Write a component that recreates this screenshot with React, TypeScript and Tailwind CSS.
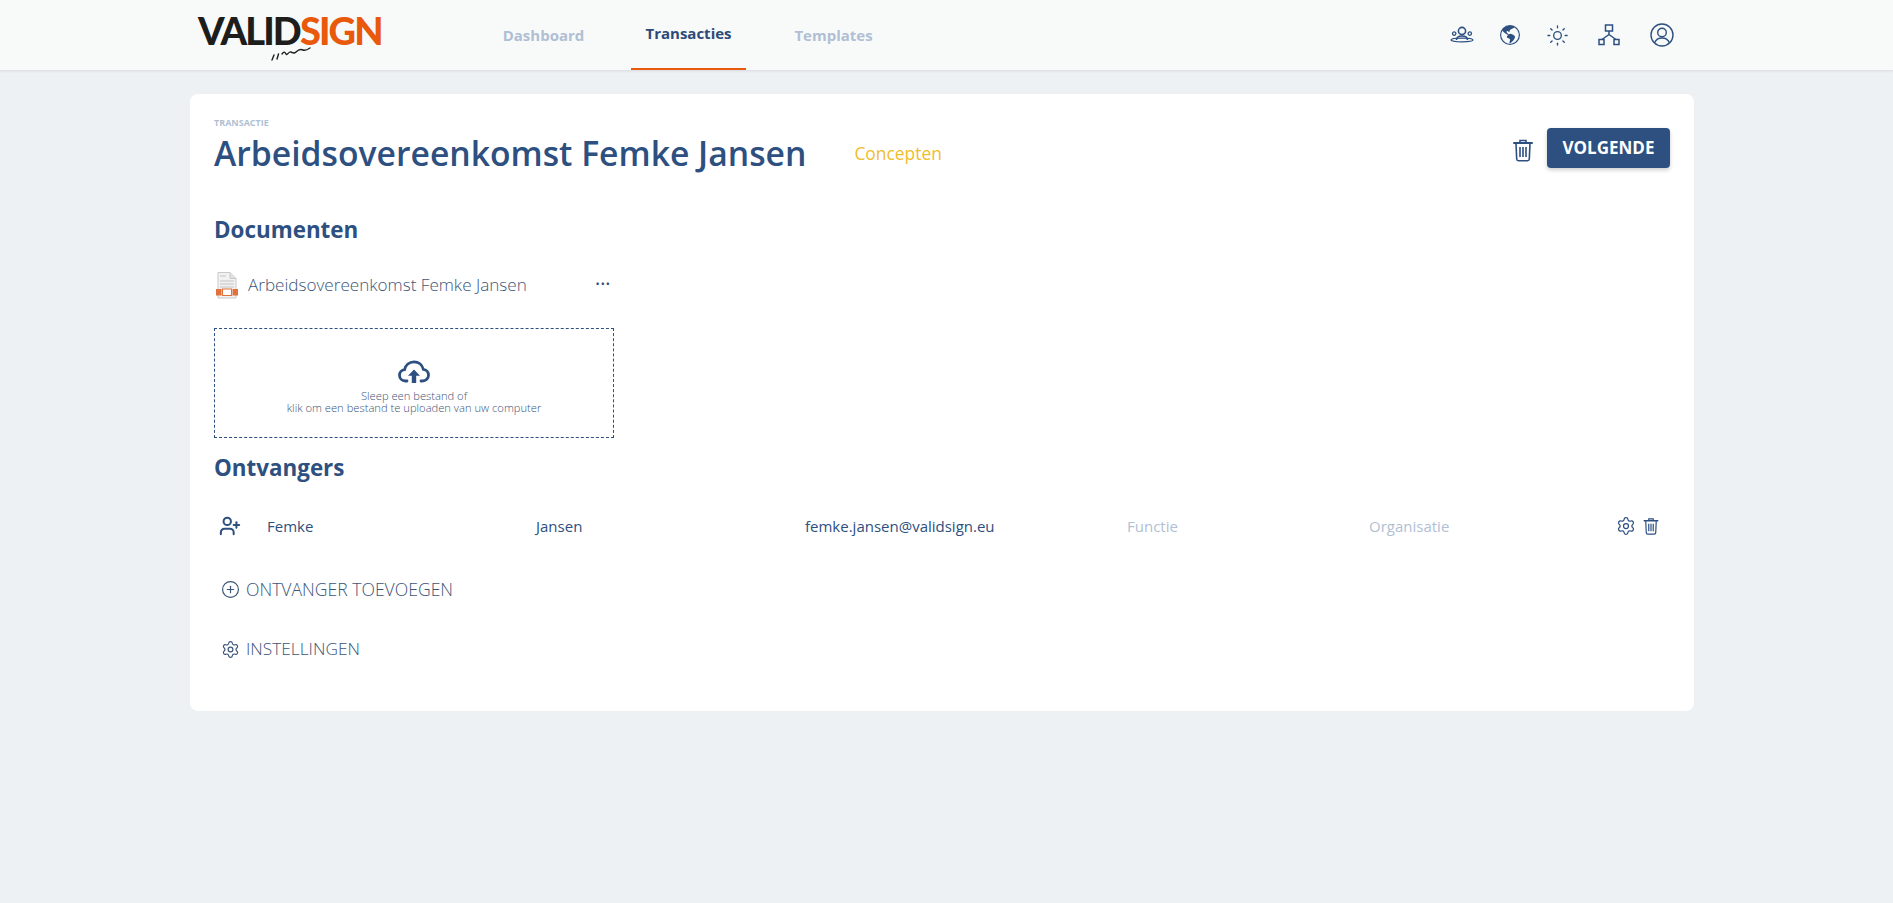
import { CirclePlus, Settings, Sun, UserPlus } from 'lucide-react';
import { BsGlobeAmericas } from 'react-icons/bs';

const font = { fontFamily: '"Open Sans", "Noto Sans", sans-serif' };

function TrashIcon({ className }: { className?: string }) {
  return (
    <svg viewBox="0 0 20 24" fill="none" stroke="currentColor" strokeWidth="1.6" className={className}>
      <path d="M1 5h18" strokeLinecap="round" strokeWidth="2" />
      <path d="M7 4.5V2.5h6v2" />
      <path d="M3 5.5l.7 15.5a1.8 1.8 0 0 0 1.8 1.7h9a1.8 1.8 0 0 0 1.8-1.7L17 5.5" />
      <path d="M7 9v10M10 9v10M13 9v10" />
    </svg>
  );
}

function PeopleIcon() {
  return (
    <svg viewBox="0 0 24 18" fill="none" stroke="currentColor" strokeWidth="1.3" className="h-[18px] w-[24px]">
      <circle cx="12" cy="5" r="3.6" strokeWidth="1.6" />
      <circle cx="4.2" cy="7.6" r="1.7" />
      <circle cx="19.8" cy="7.6" r="1.7" />
      <path d="M6.5 14c0-2.6 2.4-4 5.5-4s5.5 1.4 5.5 4" strokeWidth="1.6" />
      <ellipse cx="12" cy="14" rx="11" ry="1.8" />
    </svg>
  );
}

function NetworkIcon() {
  return (
    <svg viewBox="0 0 22 22" fill="none" stroke="currentColor" strokeWidth="1.5" className="h-[22px] w-[22px]">
      <rect x="7.5" y="1" width="7" height="6" />
      <rect x="1" y="15.5" width="5" height="5" />
      <rect x="16" y="15.5" width="5" height="5" />
      <path d="M11 7v3.5M11 10.5l-7 5M11 10.5l7 5" />
    </svg>
  );
}

function UserCircleIcon() {
  return (
    <svg viewBox="0 0 24 24" fill="none" stroke="currentColor" strokeWidth="1.4" className="h-[24px] w-[24px]">
      <circle cx="12" cy="12" r="11" />
      <circle cx="12" cy="9.5" r="4.3" />
      <path d="M4.6 19.8c1.2-3 4-4.8 7.4-4.8s6.2 1.8 7.4 4.8" />
    </svg>
  );
}

function CloudIcon() {
  return (
    <svg viewBox="0 0 32 24" fill="none" className="h-[24px] w-[32px]">
      <path
        d="M9 21H7.5C4 21 1.5 18.5 1.5 15.3c0-3 2.2-5.3 5-5.6C7.5 5 11.3 1.8 16 1.8c4.5 0 8.3 3 9.3 7.5 3 .3 5.2 2.9 5.2 5.9 0 3.2-2.6 5.8-6 5.8H23"
        stroke="#2d5080"
        strokeWidth="2.8"
        strokeLinecap="round"
      />
      <path d="M16 9.5l-6 6.3h3.8V23h4.4v-7.2H22z" fill="#2d5080" />
    </svg>
  );
}

function FileIcon() {
  return (
    <svg viewBox="0 0 22 27" className="h-[27px] w-[22px]">
      <path d="M2 0.5h12l6 6v19.5h-18z" fill="#f2f2f2" stroke="#c9c9c9" />
      <path d="M14 0.5v6h6" fill="#e0e0e0" stroke="#c9c9c9" />
      <path d="M4 4h6M4 9h14M4 12h14M4 15h14" stroke="#c4c4c4" strokeWidth="1.2" />
      <rect x="0" y="17" width="5.5" height="6.5" fill="#e2703a" />
      <rect x="16.5" y="17" width="5.5" height="6.5" fill="#e2703a" />
      <rect x="6.5" y="17" width="9" height="6.5" fill="#fff" stroke="#e2703a" />
    </svg>
  );
}

function Logo() {
  return (
    <div className="flex w-[186px] flex-col items-start">
      <div
        className="flex h-[30px] items-center text-[38px] font-black leading-none tracking-[-1.9px]"
        style={{ fontFamily: 'Lato, sans-serif' }}
      >
        <span className="text-[#1d1d1b]">VALID</span>
        <span className="text-[#e8590c]">SIGN</span>
      </div>
      <svg viewBox="0 0 42 14" fill="none" stroke="#1d1d1b" strokeWidth="1.4" strokeLinecap="round" className="ml-[72px] mt-[2px] h-[14px] w-[42px]">
        <path d="M2 13l2-5M7 12l1.5-5" />
        <path d="M12 7c2-3 3-2 4 0s3-3 5-2 3 2 5 0 5-3 7-2 4 0 7-2" />
      </svg>
    </div>
  );
}

function NavItem({ label, active }: { label: string; active?: boolean }) {
  return (
    <div
      className={
        active
          ? 'flex h-[70px] w-[115px] items-center justify-center border-b-2 border-[#e8590c] pb-[1px] text-[15px] font-bold text-[#2d4a78]'
          : 'flex h-[70px] w-[115px] items-center justify-center pt-[1px] text-[15px] font-bold text-[#b0bfd3]'
      }
    >
      {label}
    </div>
  );
}

export default function App() {
  return (
    <div className="min-h-[903px] bg-[#edf1f4] text-[#2d5080]" style={font}>
      <header className="flex h-[71px] border-b border-[#dfe3e8] bg-[#f8fafa] pl-[198px] pr-[219px] shadow-[0_1px_2px_rgba(0,0,0,0.05)]">
        <div className="flex items-center pt-[5px]">
          <Logo />
        </div>
        <nav className="ml-[102px] flex gap-[30px]">
          <NavItem label="Dashboard" />
          <NavItem label="Transacties" active />
          <NavItem label="Templates" />
        </nav>
        <div className="ml-auto flex items-center text-[#2d5080]">
          <PeopleIcon />
          <BsGlobeAmericas className="ml-[26px] h-[20px] w-[20px]" />
          <Sun className="ml-[26px] h-[23px] w-[23px]" strokeWidth={1.4} />
          <span className="ml-[29px]"><NetworkIcon /></span>
          <span className="ml-[30px]"><UserCircleIcon /></span>
        </div>
      </header>

      <main className="px-[190px] pt-[23px]">
        <section className="h-[617px] w-[1504px] rounded-[8px] bg-white px-[24px] pt-[24px]">
          <div className="flex items-start justify-between">
            <div>
              <div className="text-[9px] font-bold uppercase leading-[10px] text-[#b0bfd3]">Transactie</div>
              <div className="mt-[1px] flex items-center">
                <h1 className="text-[33.7px] font-semibold leading-[48px]">Arbeidsovereenkomst Femke Jansen</h1>
                <span className="ml-[48px] text-[17.4px] font-medium text-[#f0bd2c]">Concepten</span>
              </div>
            </div>
            <div className="mt-[10px] flex items-center gap-[14px]">
              <TrashIcon className="mt-[4px] h-[24px] w-[20px]" />
              <button className="h-[40px] w-[123px] rounded-[4px] bg-[#2d5080] text-[17px] font-bold text-white shadow-[0_2px_4px_rgba(0,0,0,0.2)]">
                VOLGENDE
              </button>
            </div>
          </div>

          <h2 className="mt-[37px] text-[22.4px] font-bold leading-[32px]">Documenten</h2>

          <div className="mt-[24px] flex h-[30px] w-[399px] items-center pl-[2px]">
            <FileIcon />
            <span className="ml-[10px] text-[17.1px] font-light text-[#3d5577]">Arbeidsovereenkomst Femke Jansen</span>
            <span className="ml-auto mr-[2px] mt-[-4px] text-[11px] leading-none tracking-[1px] text-[#2d4a78]">•••</span>
          </div>

          <div className="mt-[28px] flex h-[110px] w-[400px] flex-col items-center border border-dashed border-[#2d5080] pt-[31px]">
            <CloudIcon />
            <p className="mt-[6px] text-center text-[11.2px] font-light leading-[12px] text-[#3d5577]">
              Sleep een bestand of
              <br />
              klik om een bestand te uploaden van uw computer
            </p>
          </div>

          <h2 className="mt-[14px] text-[22.4px] font-bold leading-[32px]">Ontvangers</h2>

          <div className="mt-[26px] grid h-[32px] grid-cols-[53px_269px_269px_322px_242px_1fr_auto] items-center text-[15px]">
            <UserPlus className="ml-[4px] h-[22px] w-[24px]" strokeWidth={2.2} />
            <span>Femke</span>
            <span>Jansen</span>
            <span>femke.jansen@validsign.eu</span>
            <span className="text-[#b0bfd3]">Functie</span>
            <span className="text-[#b0bfd3]">Organisatie</span>
            <div className="mr-[11px] flex items-center gap-[7px]">
              <Settings className="h-[20px] w-[20px]" strokeWidth={1.5} />
              <TrashIcon className="h-[18px] w-[16px]" />
            </div>
          </div>

          <div className="mt-[31px] flex h-[32px] items-center pl-[7px] text-[17.6px] font-light text-[#3d5577]">
            <CirclePlus className="h-[19px] w-[19px]" strokeWidth={1.5} />
            <span className="ml-[6px]">ONTVANGER TOEVOEGEN</span>
          </div>

          <div className="mt-[28px] flex h-[32px] items-center pl-[7px] text-[17.3px] font-light text-[#3d5577]">
            <Settings className="h-[19px] w-[19px]" strokeWidth={1.5} />
            <span className="ml-[6px]">INSTELLINGEN</span>
          </div>
        </section>
      </main>
    </div>
  );
}
